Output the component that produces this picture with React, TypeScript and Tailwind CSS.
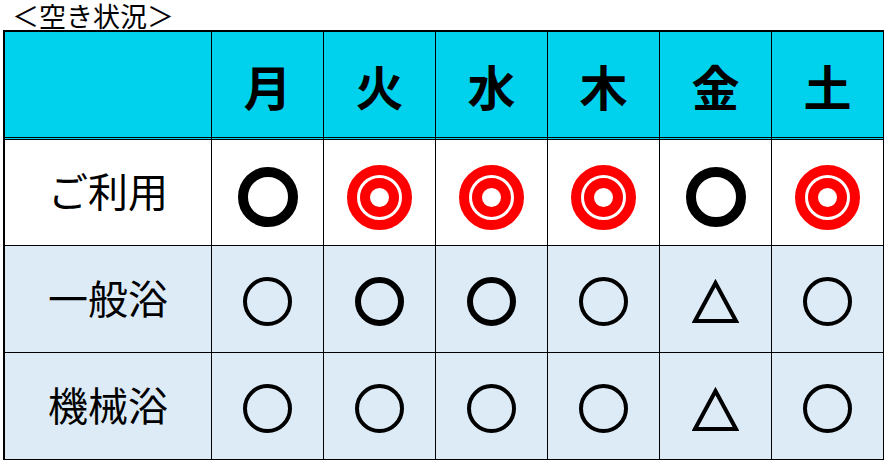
import React from 'react';

type Mark = 'bold' | 'double' | 'thin' | 'mid' | 'tri';

const days = ['月', '火', '水', '木', '金', '土'];

const rows: { label: string; marks: Mark[]; h: string; pad: string }[] = [
  { label: 'ご利用', marks: ['bold', 'double', 'double', 'double', 'bold', 'double'], h: 'h-[106px]', pad: 'pt-[9px]' },
  { label: '一般浴', marks: ['thin', 'mid', 'mid', 'thin', 'tri', 'thin'], h: 'h-[107px]', pad: 'pt-[4px]' },
  { label: '機械浴', marks: ['thin', 'thin', 'thin', 'thin', 'tri', 'thin'], h: 'h-[107px]', pad: 'pt-[5px]' },
];

function Symbol({ mark }: { mark: Mark }) {
  if (mark === 'bold') {
    return (
      <svg width="60" height="60" viewBox="0 0 60 60" aria-label="○">
        <circle cx="30" cy="30" r="25" fill="none" stroke="#000" strokeWidth="10" />
      </svg>
    );
  }
  if (mark === 'double') {
    return (
      <svg width="65" height="65" viewBox="0 0 65 65" aria-label="◎">
        <circle cx="32.5" cy="32.5" r="27.5" fill="none" stroke="#ff0000" strokeWidth="10" />
        <circle cx="32.5" cy="32.5" r="14.5" fill="none" stroke="#ff0000" strokeWidth="10" />
      </svg>
    );
  }
  if (mark === 'tri') {
    return (
      <svg width="47" height="44" viewBox="0 0 47 44" aria-label="△">
        <polygon points="23.5,4 3,42 44,42" fill="none" stroke="#000" strokeWidth="4" strokeLinejoin="miter" />
      </svg>
    );
  }
  const sw = mark === 'mid' ? 6 : 4;
  return (
    <svg width="49" height="49" viewBox="0 0 49 49" aria-label="○">
      <circle cx="24.5" cy="24.5" r={24.5 - sw / 2} fill="none" stroke="#000" strokeWidth={sw} />
    </svg>
  );
}

export default function App() {
  return (
    <div className="w-[886px] h-[462px] bg-white text-black font-['Noto_Sans_CJK_JP','Liberation_Sans',sans-serif]">
      <div className="h-[30px] pl-[12px] pt-[1px] text-[27px] leading-[29px] whitespace-nowrap">＜空き状況＞</div>

      <div className="ml-[3px] w-[881px] grid grid-cols-[207px_repeat(6,112px)] border-l-2 border-t-2 border-black">
        {/* header */}
        <div className="h-[108px] bg-[#00d2ee] border-r border-b-[3px] border-double border-black" />
        {days.map(d => (
          <div
            key={d}
            className="h-[108px] bg-[#00d2ee] border-r border-b-[3px] border-double border-black flex items-center justify-center text-[48px] font-bold leading-none"
          >
            {d}
          </div>
        ))}

        {/* body */}
        {rows.map((row, i) => (
          <React.Fragment key={row.label}>
            <div
              className={`${row.h} ${i === 0 ? 'bg-white' : 'bg-[#ddebf7]'} pb-[5px] border-r border-b border-black flex items-center justify-center text-[40px] leading-none`}
            >
              {row.label}
            </div>
            {row.marks.map((m, j) => (
              <div
                key={j}
                className={`${row.h} ${row.pad} ${i === 0 ? 'bg-white' : 'bg-[#ddebf7]'} border-r border-b border-black flex items-center justify-center`}
              >
                <Symbol mark={m} />
              </div>
            ))}
          </React.Fragment>
        ))}
      </div>
    </div>
  );
}
